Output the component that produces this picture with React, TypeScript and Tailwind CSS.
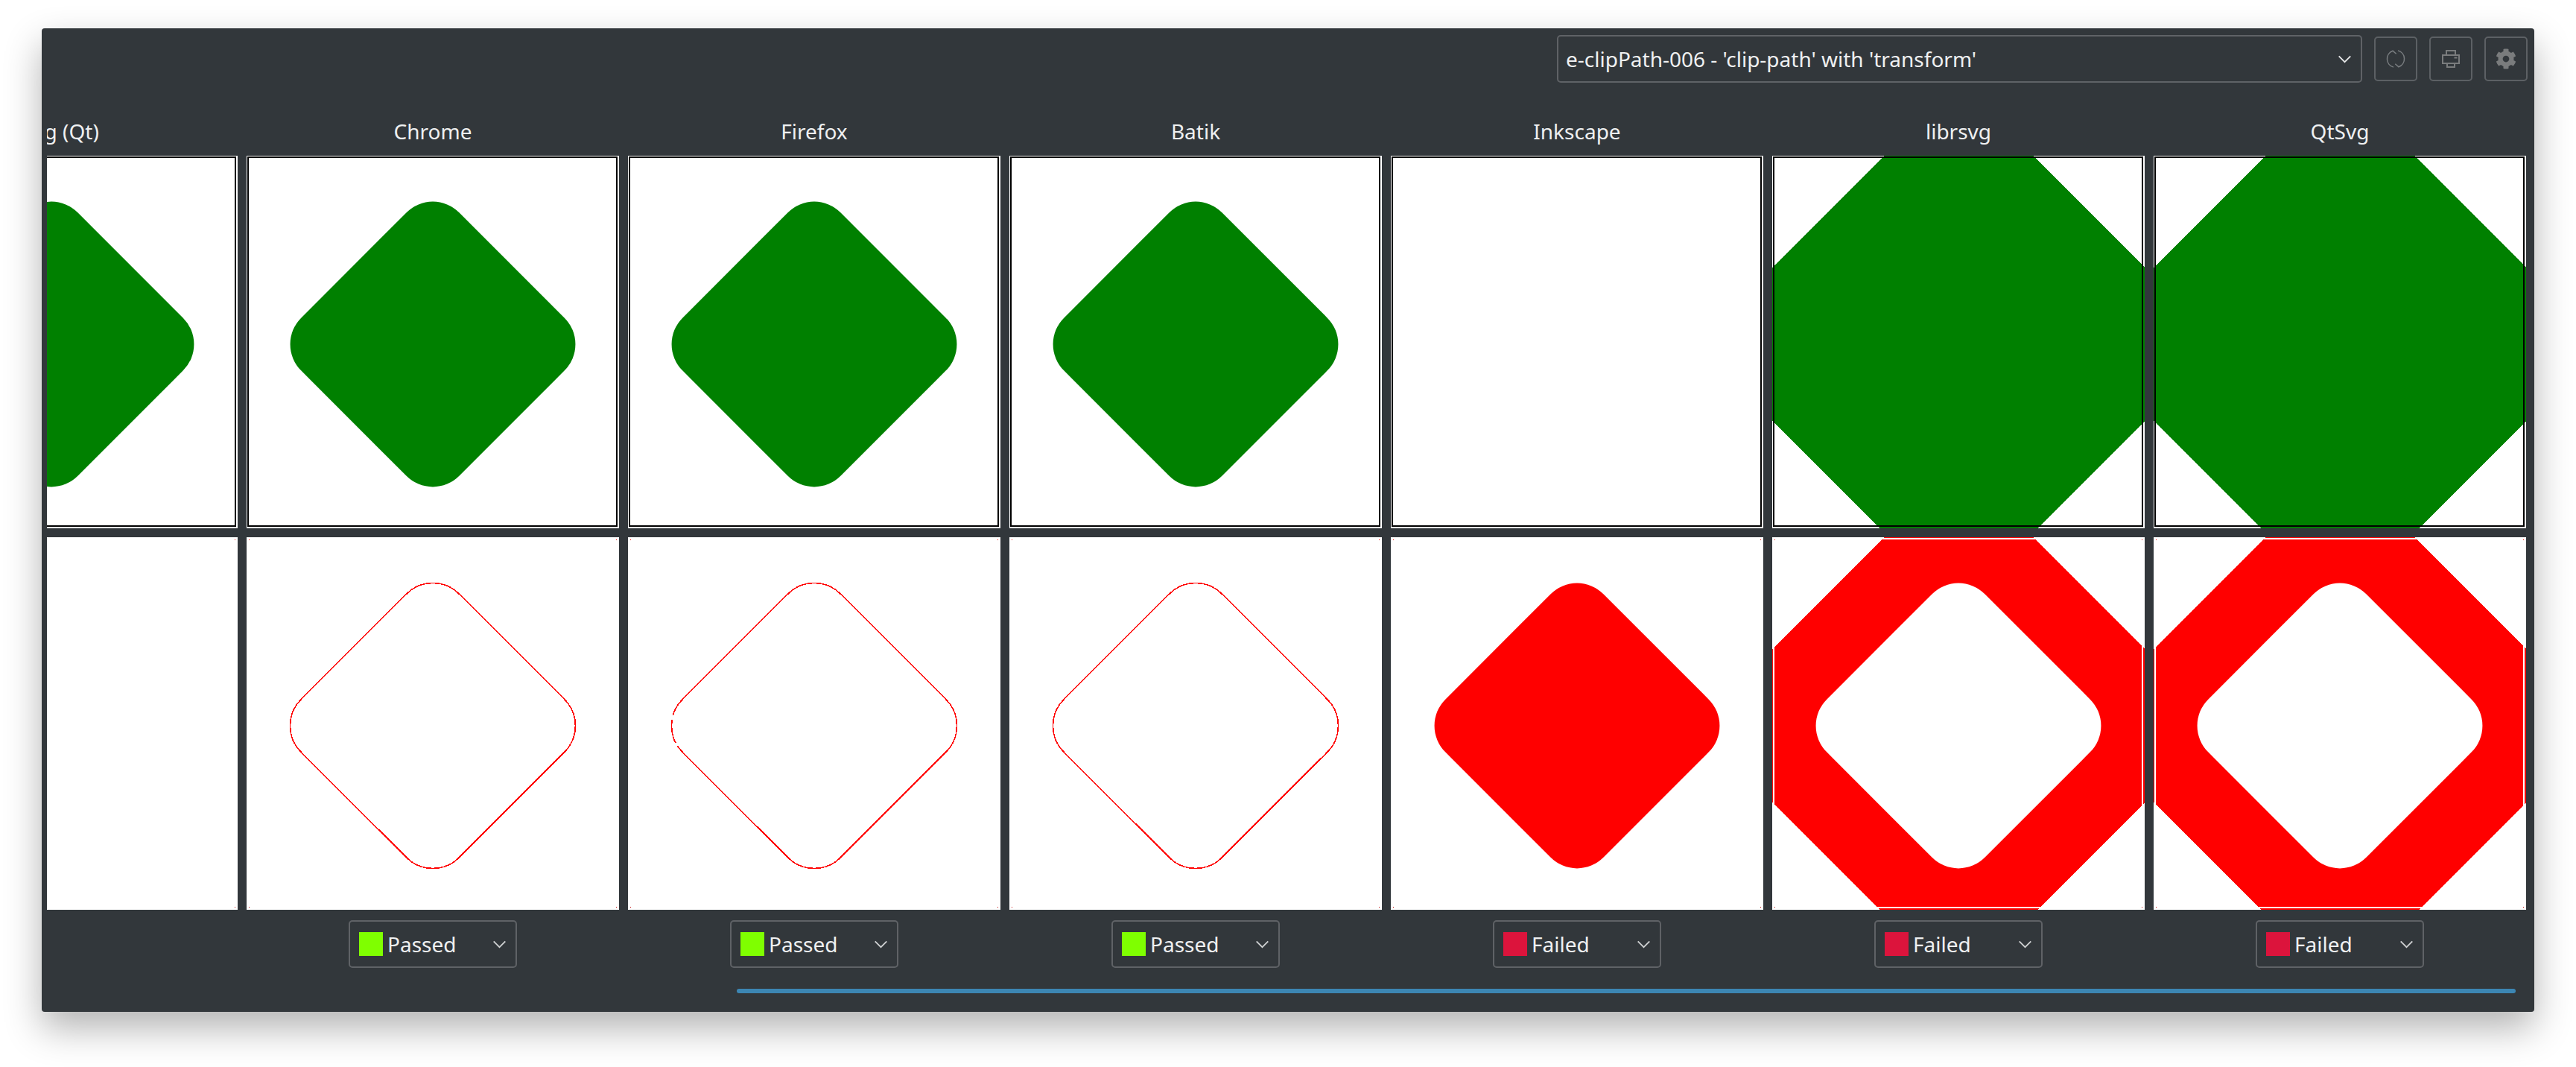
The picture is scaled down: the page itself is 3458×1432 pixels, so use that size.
import React from 'react';
import { FaCog } from 'react-icons/fa';

type Shape = 'diamond' | 'octagon' | 'none';

interface Column {
  name: string;
  shape: Shape;
  diff: 'none' | 'outline' | 'fill' | 'ring';
  status?: 'Passed' | 'Failed';
  gaps?: boolean;
}

const COLUMNS: Column[] = [
  { name: 'resvg (Qt)', shape: 'diamond', diff: 'none' },
  { name: 'Chrome', shape: 'diamond', diff: 'outline', status: 'Passed' },
  { name: 'Firefox', shape: 'diamond', diff: 'outline', status: 'Passed', gaps: true },
  { name: 'Batik', shape: 'diamond', diff: 'outline', status: 'Passed' },
  { name: 'Inkscape', shape: 'none', diff: 'fill', status: 'Failed' },
  { name: 'librsvg', shape: 'octagon', diff: 'ring', status: 'Failed' },
  { name: 'QtSvg', shape: 'octagon', diff: 'ring', status: 'Failed' },
];

const OCTAGON = '150,0 350,0 500,150 500,356 356,500 144,500 0,356 0,150';

const Diamond = (props: React.SVGProps<SVGRectElement>) => (
  <rect x="100" y="103" width="300" height="300" rx="50" transform="rotate(45 250 253)" {...props} />
);

// top row: what the renderer drew, with the thin frame over it
const RenderImage = ({ shape }: { shape: Shape }) => (
  <svg viewBox="0 0 500 500" className="block w-[500px] h-[500px] bg-white shrink-0">
    {shape === 'diamond' && <Diamond fill="#008000" />}
    {shape === 'octagon' && <polygon points={OCTAGON} fill="#008000" shapeRendering="crispEdges" />}
    <rect x="2" y="2" width="495" height="495" fill="none" stroke="#000" strokeWidth="2" />
  </svg>
);

// bottom row: difference against the reference
const DiffImage = ({ column }: { column: Column }) => (
  <svg viewBox="0 0 500 500" className="block w-[500px] h-[500px] bg-white shrink-0">
    {column.diff === 'outline' && (
      <Diamond fill="none" stroke="#ff0000" strokeWidth="1.6" shapeRendering="crispEdges" />
    )}
    {column.diff === 'fill' && <Diamond fill="#ff0000" />}
    {column.diff === 'ring' && (
      <>
        <polygon points={OCTAGON} fill="#ff0000" shapeRendering="crispEdges" />
        <Diamond fill="#fff" />
        <rect x="2" y="2" width="495" height="495" fill="none" stroke="#fff" strokeWidth="2" />
      </>
    )}
    {column.gaps && (
      <>
        <rect x="57" y="239" width="7" height="6" fill="#fff" />
        <rect x="62" y="276" width="5" height="4" fill="#fff" />
      </>
    )}
    <rect x="3" y="3" width="1" height="1" fill="#ff0000" />
    <rect x="496" y="3" width="1" height="1" fill="#ff0000" />
    <rect x="3" y="496" width="1" height="1" fill="#c00000" />
    <rect x="496" y="496" width="1" height="1" fill="#c00000" />
  </svg>
);

const Chevron = ({ className }: { className: string }) => (
  <svg viewBox="0 0 20 12" className={className} fill="none" stroke="currentColor" strokeWidth="2">
    <path d="M1.5 1.5 L10 10 L18.5 1.5" />
  </svg>
);

const StatusSelect = ({ status }: { status: 'Passed' | 'Failed' }) => (
  <div className="w-[226px] h-[64px] flex items-center pl-3 pr-[12px] border-2 border-[#5f6266] rounded-[5px]">
    <span className={status === 'Passed' ? 'w-8 h-8 bg-[#7fff00]' : 'w-8 h-8 bg-[#dc143c]'} />
    <span className="ml-[6px] flex-1">{status}</span>
    <Chevron className="w-[19px] h-[11px] text-[#cfd1d2]" />
  </div>
);

const ToolButton = ({ children }: { children: React.ReactNode }) => (
  <button className="w-[58px] h-[60px] flex items-center justify-center border-2 border-[#5c6064] rounded-[5px] text-[#7a7c7d]">
    {children}
  </button>
);

export default function App() {
  return (
    <div className="h-[1432px] w-full bg-white overflow-hidden pt-[38px] pl-[56px] font-['Noto_Sans',sans-serif] text-[28px] text-[#eff0f1]">
      <div className="w-[3346px] h-[1320px] flex flex-col bg-[#32373b] rounded-[4px] shadow-[0_22px_50px_rgba(0,0,0,0.3)]">
        <div className="flex justify-end items-center gap-4 pt-[9px] pr-[9px]">
          <div className="w-[1081px] h-[64px] flex items-center pl-[10px] pr-[12px] border-2 border-[#5f6266] rounded-[5px]">
            <span className="flex-1">e-clipPath-006 - 'clip-path' with 'transform'</span>
            <Chevron className="w-[19px] h-[11px] text-[#e6e7e8]" />
          </div>
          <ToolButton>
            <svg viewBox="0 0 28 28" className="w-7 h-7" fill="none" stroke="#7a7e81" strokeWidth="1.5">
              <path d="M11 25.1 A11.5 11.5 0 0 1 10 3.2 L14.7 7.3" />
              <path d="M17 2.9 A11.5 11.5 0 0 1 18 24.8 L13.3 20.7" />
            </svg>
          </ToolButton>
          <ToolButton>
            <svg viewBox="0 0 24 24" className="w-6 h-6" fill="none" stroke="currentColor" strokeWidth="2">
              <path d="M6 7 V1 H18 V7" />
              <path d="M6 18 H1 V7 H23 V18 H18" />
              <path d="M7 17 V23 H17 V17" />
              <path d="M5 18 H19" />
              <path d="M16.5 10.5 H20.5" />
            </svg>
          </ToolButton>
          <ToolButton>
            <FaCog className="w-7 h-7" />
          </ToolButton>
        </div>

        <div className="ml-[7px] w-[3328px] overflow-hidden mt-[47px]">
          <div className="flex gap-3 -ml-[244px] w-max">
            {COLUMNS.map(column => (
              <div key={column.name} className="w-[500px] flex flex-col items-center">
                <div className="h-[36px] leading-[36px] mb-[15px] text-center text-[#eff0f1]">{column.name}</div>
                <RenderImage shape={column.shape} />
                <div className="h-3" />
                <DiffImage column={column} />
                <div className="h-[64px] mt-[14px]">
                  {column.status && <StatusSelect status={column.status} />}
                </div>
              </div>
            ))}
          </div>
        </div>

        <div className="mt-[28px] ml-[933px] w-[2388px] h-[6px] rounded-full bg-[#3c86b3]" />
      </div>
    </div>
  );
}
